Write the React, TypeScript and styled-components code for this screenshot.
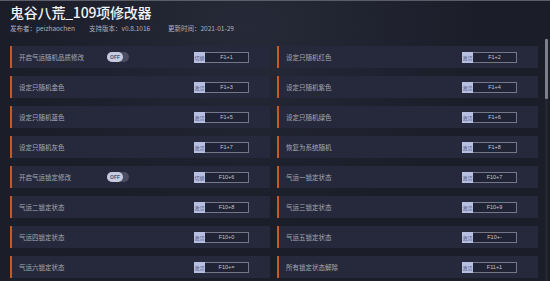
import styled, { createGlobalStyle } from "styled-components";

const GlobalStyle = createGlobalStyle`
  html, body {
    margin: 0;
    padding: 0;
    background: #1b1d29;
  }
  * {
    box-sizing: border-box;
  }
`;

const Window = styled.div`
  position: relative;
  width: 550px;
  height: 281px;
  overflow: hidden;
  border-top: 1px solid #5b5e68;
  background:
    radial-gradient(ellipse at 45% 10%, rgba(60, 64, 82, 0.35), transparent 55%),
    #1b1d29;
  font-family: "Noto Sans CJK SC", "Noto Sans", sans-serif;
  padding: 0 10px;
`;

const Header = styled.header`
  height: 45px;
  padding-top: 2px;
`;

const Title = styled.h1`
  margin: 0;
  color: #f2f3f5;
  font-size: 14px;
  font-weight: 500;
  line-height: 18px;
  letter-spacing: -0.2px;
`;

const Meta = styled.div`
  display: grid;
  grid-template-columns: 79px 79px 79px;
  margin-top: 2px;
`;

const MetaItem = styled.span`
  color: #aeb1bc;
  font-size: 6.5px;
  line-height: 10px;
  white-space: nowrap;
`;

const List = styled.div`
  display: grid;
  grid-template-columns: 260px 261px;
  column-gap: 7px;
  row-gap: 8px;
`;

const Row = styled.div`
  display: flex;
  align-items: center;
  height: 22px;
  padding: 0 21px 0 7px;
  background: #26293b;
  border-left: 2px solid #c45a28;
`;

const Label = styled.span`
  flex: 0 0 88px;
  color: #a6a9b6;
  font-size: 6.5px;
  white-space: nowrap;
`;

const Toggle = styled.div`
  display: flex;
  width: 22px;
  height: 10px;
  border-radius: 5px;
  background: #4a4d5f;
`;

const Knob = styled.span`
  display: flex;
  align-items: center;
  justify-content: center;
  width: 16px;
  height: 10px;
  border-radius: 5px;
  background: #c6cbe1;
  color: #4f5470;
  font-family: "Liberation Sans", sans-serif;
  font-size: 5px;
  font-weight: 700;
`;

const Hotkey = styled.div`
  display: flex;
  margin-left: auto;
  width: 55px;
  height: 11px;
  border: 1px solid #737787;
  background: #202333;
`;

const Tag = styled.span`
  display: flex;
  align-items: center;
  justify-content: center;
  width: 11px;
  margin: -1px 0 -1px -1px;
  background: #b8c0e2;
  color: #505a84;
  font-size: 5px;
  white-space: nowrap;
`;

const Key = styled.span`
  flex: 1;
  display: flex;
  align-items: center;
  justify-content: center;
  color: #c3c6d0;
  font-family: "Liberation Sans", sans-serif;
  font-size: 5.5px;
`;

const ScrollTrack = styled.div`
  position: absolute;
  right: 2px;
  top: 38px;
  bottom: 0;
  width: 3px;
  background: #23252f;
`;

const ScrollThumb = styled.div`
  position: absolute;
  right: 2px;
  top: 38px;
  width: 3px;
  height: 60px;
  border-radius: 1px;
  background: #7d808c;
`;

interface Cheat {
  label: string;
  tag: string;
  key: string;
  toggle?: boolean;
}

const cheats: Cheat[] = [
  { label: "开启气运随机品质修改", tag: "切换", key: "F1+1", toggle: true },
  { label: "设定只随机红色", tag: "激活", key: "F1+2" },
  { label: "设定只随机金色", tag: "激活", key: "F1+3" },
  { label: "设定只随机紫色", tag: "激活", key: "F1+4" },
  { label: "设定只随机蓝色", tag: "激活", key: "F1+5" },
  { label: "设定只随机绿色", tag: "激活", key: "F1+6" },
  { label: "设定只随机灰色", tag: "激活", key: "F1+7" },
  { label: "恢复为系统随机", tag: "激活", key: "F1+8" },
  { label: "开启气运锁定修改", tag: "切换", key: "F10+6", toggle: true },
  { label: "气运一锁定状态", tag: "激活", key: "F10+7" },
  { label: "气运二锁定状态", tag: "激活", key: "F10+8" },
  { label: "气运三锁定状态", tag: "激活", key: "F10+9" },
  { label: "气运四锁定状态", tag: "激活", key: "F10+0" },
  { label: "气运五锁定状态", tag: "激活", key: "F10+-" },
  { label: "气运六锁定状态", tag: "激活", key: "F10+=" },
  { label: "所有锁定状态解除", tag: "激活", key: "F11+1" },
];

function App() {
  return (
    <>
      <GlobalStyle />
      <Window>
        <Header>
          <Title>鬼谷八荒_109项修改器</Title>
          <Meta>
            <MetaItem>发布者：peizhaochen</MetaItem>
            <MetaItem>支持版本：v0.8.1016</MetaItem>
            <MetaItem>更新时间：2021-01-29</MetaItem>
          </Meta>
        </Header>
        <List>
          {cheats.map((c) => (
            <Row key={c.key}>
              <Label>{c.label}</Label>
              {c.toggle && (
                <Toggle>
                  <Knob>OFF</Knob>
                </Toggle>
              )}
              <Hotkey>
                <Tag>{c.tag}</Tag>
                <Key>{c.key}</Key>
              </Hotkey>
            </Row>
          ))}
        </List>
        <ScrollTrack />
        <ScrollThumb />
      </Window>
    </>
  );
}

export default App;
